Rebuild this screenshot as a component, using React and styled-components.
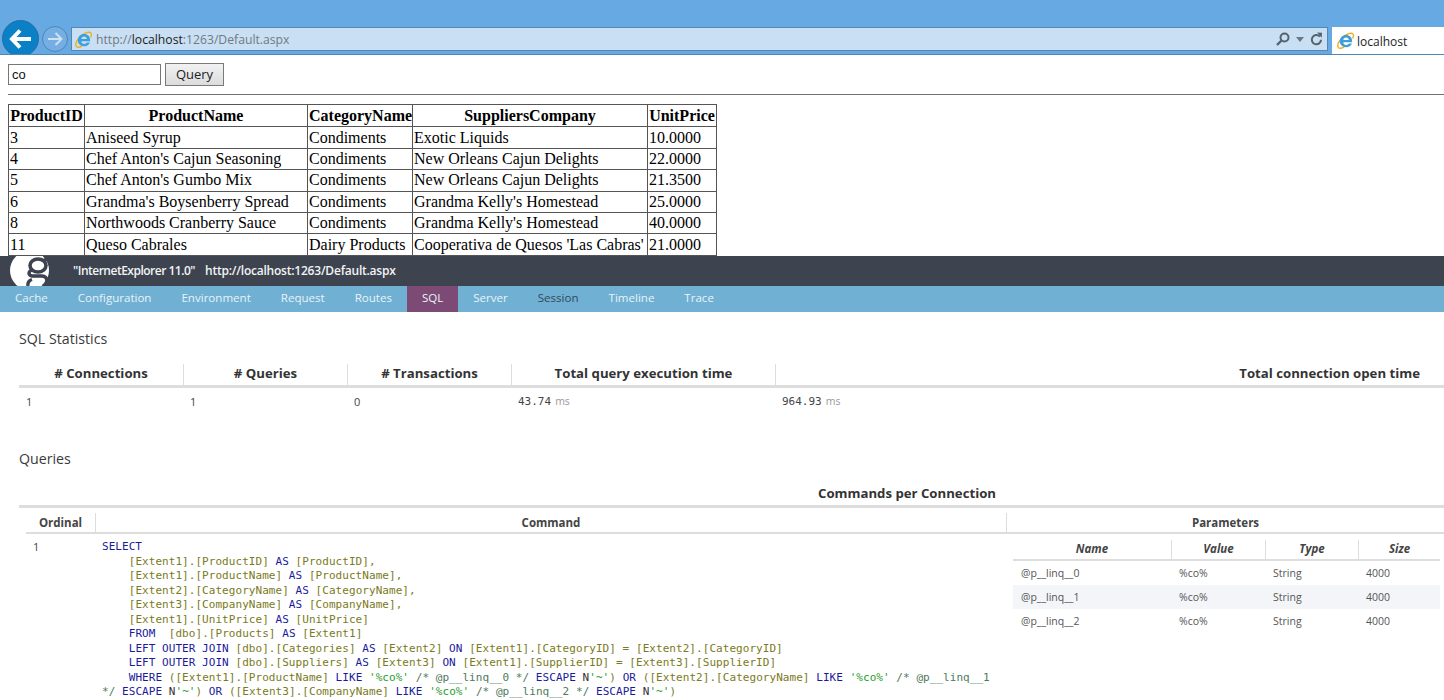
import React from "react";
import styled, { createGlobalStyle } from "styled-components";

const Global = createGlobalStyle`
  html, body { margin: 0; padding: 0; background: #fff; }
  * { box-sizing: border-box; }
`;

const Page = styled.div`
  width: 1444px;
  height: 700px;
  overflow: hidden;
  display: flex;
  flex-direction: column;
  font-family: "Liberation Serif", serif;
`;

/* browser chrome */
const Chrome = styled.header`
  height: 55px;
  flex: none;
  background: #67aae3;
  border-bottom: 1px solid #4d87b8;
  padding: 20px 0 0 2px;
  display: flex;
  overflow: hidden;
`;
const BackButton = styled.div`
  width: 37px;
  height: 37px;
  flex: none;
  border-radius: 50%;
  background: #0a80c6;
  border: 1px solid #2a6d9e;
  display: flex;
  align-items: center;
  justify-content: center;
`;
const ForwardButton = styled.div`
  width: 26px;
  height: 26px;
  flex: none;
  margin: 6px 0 0 3px;
  border-radius: 50%;
  background: #74aee2;
  border: 1px solid #4f86b4;
  display: flex;
  align-items: center;
  justify-content: center;
`;
const AddressBar = styled.div`
  width: 1257px;
  height: 24px;
  flex: none;
  margin: 7px 0 0 3px;
  background: #c9dff4;
  border: 1px solid #5488b4;
  display: flex;
  align-items: center;
  padding: 0 0 0 3px;
`;
const Url = styled.span`
  margin: 1px 0 0 4px;
  flex: 1;
  font: 12.2px "Open Sans", sans-serif;
  color: #6f7a85;
`;
const Host = styled.span`
  color: #1c1c1c;
`;
const BarTools = styled.div`
  display: flex;
  align-items: center;
  gap: 3px;
  padding-right: 4px;
`;
const ChromeTab = styled.div`
  margin: 7px 0 0 4px;
  flex: 1;
  height: 27px;
  background: #fff;
  display: flex;
  align-items: center;
  padding-left: 5px;
  gap: 3px;
  font: 12px "Open Sans", sans-serif;
  color: #1c1c1c;
`;
const TabTitle = styled.span`
  margin-top: 2px;
`;

/* page content */
const Content = styled.main`
  height: 201px;
  flex: none;
  overflow: hidden;
  padding: 8px 0 0 8px;
`;
const QueryForm = styled.form`
  display: flex;
  align-items: center;
  gap: 4px;
  height: 23px;
`;
const QueryInput = styled.input`
  width: 153px;
  height: 21px;
  border: 1px solid #767676;
  padding: 0 3px;
  font: 13px "Liberation Sans", sans-serif;
  color: #111;
  outline: none;
`;
const QueryButton = styled.button`
  width: 59px;
  height: 23px;
  border: 1px solid #7a7a7a;
  background: linear-gradient(#f2f2f2, #dcdcdc);
  padding: 0 0 2px;
  font: 13px "Open Sans", sans-serif;
  color: #222;
`;
const Rule = styled.hr`
  margin: 8px 0 9px;
  height: 1px;
  border: 0;
  background: #707070;
`;
const ProductTable = styled.table`
  border-collapse: collapse;
  table-layout: fixed;
  width: 708px;
  font-size: 16px;
  color: #000;
  th, td {
    border: 1px solid #555;
    padding: 0 1px;
    height: 21.4px;
    line-height: 18px;
    white-space: nowrap;
    overflow: hidden;
  }
  th { font-weight: 700; text-align: center; height: 22.4px; }
  td { text-align: left; }
`;

/* diagnostics panel */
const Panel = styled.section`
  flex: 1;
  min-height: 0;
  overflow: hidden;
  position: relative;
  font-family: "Open Sans", sans-serif;
  color: #333;
  background: #fff;
`;
const PanelHeader = styled.div`
  height: 30px;
  background: #3d4450;
  display: flex;
  align-items: center;
  overflow: hidden;
  padding-left: 10px;
  font-size: 12px;
  font-weight: 600;
  color: #f2f3f4;
`;
const LogoBox = styled.div`
  width: 39px;
  height: 30px;
  margin-right: 24px;
  flex: none;
`;
const BrowserName = styled.span`
  white-space: pre;
  margin-top: -2px;
  letter-spacing: -0.5px;
`;
const PageUrl = styled.span`
  white-space: pre;
  margin: -2px 0 0 10px;
  letter-spacing: -0.22px;
`;
const TabBar = styled.nav`
  height: 26px;
  background: #70b0d3;
  display: flex;
`;
const Tab = styled.div`
  height: 26px;
  padding: 0 15px 4px;
  display: flex;
  align-items: center;
  font-size: 11.55px;
  color: ${p => (p.$dark ? "#34495a" : "#e8f3f8")};
  background: ${p => (p.$active ? "#7d4a76" : "transparent")};
`;
const Body = styled.div`
  padding: 17px 0 0 19px;
`;
const SectionTitle = styled.h2`
  margin: 0;
  font-size: 14.2px;
  line-height: 20px;
  font-weight: 400;
  color: #3a3a3a;
`;
const StatsHead = styled.div`
  display: grid;
  grid-template-columns: 165px 164px 164px 264px 1fr;
  height: 24px;
  margin-top: 15px;
  border-bottom: 3px solid #ddd;
`;
const StatHeadCell = styled.div`
  height: 21px;
  padding: ${p => (p.$right ? "0 24px 0 0" : "0")};
  text-align: ${p => (p.$right ? "right" : "center")};
  line-height: 18px;
  font-size: 13.2px;
  font-weight: 700;
  color: #333;
  border-right: ${p => (p.$last ? "0" : "1px solid #ddd")};
`;
const StatsRow = styled.div`
  display: grid;
  grid-template-columns: 164px 164px 164px 264px 1fr;
  height: 26px;
  align-items: center;
`;
const StatCount = styled.div`
  padding-left: 7px;
  font: 11px "Open Sans", sans-serif;
  color: #444;
`;
const StatValue = styled.div`
  padding-left: 7px;
  font: 11px "DejaVu Sans Mono", monospace;
  color: #444;
`;
const Unit = styled.span`
  margin-left: 4px;
  color: #999;
  font: 10.5px "Open Sans", sans-serif;
`;
const QueriesTitle = styled(SectionTitle)`
  margin-top: 35px;
`;
const CommandsTitle = styled.div`
  margin-top: 14px;
  padding-left: 351px;
  height: 25px;
  text-align: center;
  font-size: 13.2px;
  font-weight: 700;
  line-height: 20px;
  color: #333;
  border-bottom: 3px solid #ddd;
`;
const CommandsHead = styled.div`
  display: grid;
  grid-template-columns: 70px 911px 1fr;
  margin-left: 7px;
  height: 26px;
  border-bottom: 2px solid #ddd;
`;
const CommandHeadCell = styled.div`
  height: 19px;
  margin-top: 5px;
  text-align: center;
  font-size: 11.5px;
  font-weight: 700;
  line-height: 19px;
  color: #444;
  border-right: ${p => (p.$last ? "0" : "1px solid #ddd")};
`;
const CommandRow = styled.div`
  display: grid;
  grid-template-columns: 76px 911px 1fr;
`;
const Ordinal = styled.div`
  padding: 5px 0 0 14px;
  font: 11px "Open Sans", sans-serif;
  color: #444;
`;
const Sql = styled.pre`
  margin: 0;
  padding: 6px 0 0 7px;
  font: 11px/14.5px "DejaVu Sans Mono", monospace;
  letter-spacing: 0.05px;
  color: #333;
  white-space: pre;
`;
const Kw = styled.span`color: #1a1a9c;`;
const Br = styled.span`color: #7a7a22;`;
const Str = styled.span`color: #1f9c2a;`;
const Cm = styled.span`color: #4d7a5c;`;
const ParamsWrap = styled.div`
  padding: 6px 4px 0 7px;
`;
const ParamsHead = styled.div`
  display: grid;
  grid-template-columns: 159px 94px 93px 1fr;
  height: 21px;
  border-bottom: 2px solid #ddd;
`;
const ParamHeadCell = styled.div`
  height: 19px;
  text-align: center;
  font-size: 11.5px;
  font-style: italic;
  font-weight: 700;
  line-height: 17px;
  color: #444;
  border-right: ${p => (p.$last ? "0" : "1px solid #ddd")};
`;
const ParamRow = styled.div`
  display: grid;
  grid-template-columns: 158px 94px 93px 1fr;
  height: 24px;
  padding-bottom: 1px;
  align-items: center;
  background: ${p => (p.$striped ? "#f3f5f9" : "transparent")};
`;
const ParamCell = styled.div`
  padding-left: 8px;
  font-size: 10.5px;
  color: #555;
`;

const IeIcon = () => (
  <svg width="17" height="17" viewBox="0 0 17 17" aria-hidden="true">
    <path d="M16 2.200C14.500.2 9.500 1.500 5.500 5.600 1.800 9.400.2 13.500 1.300 15.300c1 1.400 3.700.8 6-.5" fill="none" stroke="#eeb01c" strokeWidth="1.400" />
    <path d="M16 2.200c.7 1 .4 2.700-.4 4.300" fill="none" stroke="#eeb01c" strokeWidth="1.400" />
    <path d="M2.800 9.300C2.800 5.500 5.600 2.900 9.200 2.900c3.500 0 5.900 2.500 5.900 6v1.300H6.300c.1 1.700 1.300 2.700 3 2.700 1.200 0 2.100-.5 2.600-1.400h3c-.8 2.300-3 3.700-5.600 3.700-3.800 0-6.500-2.400-6.500-5.900zm3.500-1.200h5.500c-.1-1.500-1.100-2.600-2.700-2.600-1.500 0-2.600 1-2.800 2.600z" fill="#3d9fdd" />
  </svg>
);

const BackArrow = () => (
  <svg width="24" height="22" viewBox="0 0 24 22" aria-hidden="true">
    <path d="M11 2.500 3 11l8 8.500M3.500 11H22" fill="none" stroke="#fff" strokeWidth="4" />
  </svg>
);
const ForwardArrow = () => (
  <svg width="16" height="14" viewBox="0 0 16 14" aria-hidden="true">
    <path d="M8.500 1 14.500 7l-6 6M14 7H1" fill="none" stroke="#cfe0f0" strokeWidth="2" />
  </svg>
);
const SearchIcon = () => (
  <svg width="14" height="14" viewBox="0 0 14 14" aria-hidden="true">
    <circle cx="8.500" cy="5.500" r="4" fill="none" stroke="#55636f" strokeWidth="2" />
    <path d="M5.500 8.500 1 13" stroke="#55636f" strokeWidth="2.400" />
  </svg>
);
const CaretSvg = styled.svg`
  margin: 0 3px;
`;
const Caret = () => (
  <CaretSvg width="8" height="5" viewBox="0 0 8 5" aria-hidden="true">
    <path d="M0 0h8L4 5z" fill="#6b7882" />
  </CaretSvg>
);
const RefreshIcon = () => (
  <svg width="13" height="14" viewBox="0 0 13 14" aria-hidden="true">
    <path d="M9.800 4.600a4.600 4.600 0 1 0 1.200 3.100" fill="none" stroke="#55636f" strokeWidth="2" />
    <path d="M7 .5l5 .2-.3 5z" fill="#55636f" />
  </svg>
);
const Logo = () => (
  <svg width="39" height="30" viewBox="0 0 39 30" aria-hidden="true">
    <circle cx="19.500" cy="14.500" r="19.500" fill="#fff" />
    <ellipse cx="28" cy="9.500" rx="8" ry="6.500" fill="none" stroke="#3d4450" strokeWidth="3.600" />
    <path d="M33 4.500l6-2" fill="none" stroke="#3d4450" strokeWidth="3" />
    <path d="M22 14c-4 1.500-4 5 0 6h10c6 .5 6.500 7 1 10" fill="none" stroke="#3d4450" strokeWidth="3.400" />
    <path d="M18 30c-.5-3 1-5.500 4-6.500" fill="none" stroke="#3d4450" strokeWidth="3.400" />
  </svg>
);

const products = [
  ["3", "Aniseed Syrup", "Condiments", "Exotic Liquids", "10.0000"],
  ["4", "Chef Anton's Cajun Seasoning", "Condiments", "New Orleans Cajun Delights", "22.0000"],
  ["5", "Chef Anton's Gumbo Mix", "Condiments", "New Orleans Cajun Delights", "21.3500"],
  ["6", "Grandma's Boysenberry Spread", "Condiments", "Grandma Kelly's Homestead", "25.0000"],
  ["8", "Northwoods Cranberry Sauce", "Condiments", "Grandma Kelly's Homestead", "40.0000"],
  ["11", "Queso Cabrales", "Dairy Products", "Cooperativa de Quesos 'Las Cabras'", "21.0000"],
];
const tabs = ["Cache", "Configuration", "Environment", "Request", "Routes", "SQL", "Server", "Session", "Timeline", "Trace"];
const stats = ["# Connections", "# Queries", "# Transactions", "Total query execution time", "Total connection open time"];
const params = ["@p__linq__0", "@p__linq__1", "@p__linq__2"];

export default function App() {
  return (
    <Page>
      <Global />
      <Chrome>
        <BackButton><BackArrow /></BackButton>
        <ForwardButton><ForwardArrow /></ForwardButton>
        <AddressBar>
          <IeIcon />
          <Url>http://<Host>localhost</Host>:1263/Default.aspx</Url>
          <BarTools><SearchIcon /><Caret /><RefreshIcon /></BarTools>
        </AddressBar>
        <ChromeTab><IeIcon /><TabTitle>localhost</TabTitle></ChromeTab>
      </Chrome>
      <Content>
        <QueryForm>
          <QueryInput defaultValue="co" />
          <QueryButton type="button">Query</QueryButton>
        </QueryForm>
        <Rule />
        <ProductTable>
          <colgroup>
            <col width="76" /><col width="223" /><col width="105" /><col width="235" /><col width="69" />
          </colgroup>
          <thead>
            <tr><th>ProductID</th><th>ProductName</th><th>CategoryName</th><th>SuppliersCompany</th><th>UnitPrice</th></tr>
          </thead>
          <tbody>
            {products.map(r => (
              <tr key={r[0]}>{r.map((c, i) => <td key={i}>{c}</td>)}</tr>
            ))}
          </tbody>
        </ProductTable>
      </Content>
      <Panel>
        <PanelHeader>
          <LogoBox><Logo /></LogoBox>
          <BrowserName>"InternetExplorer 11.0"</BrowserName>
          <PageUrl>http://localhost:1263/Default.aspx</PageUrl>
        </PanelHeader>
        <TabBar>
          {tabs.map(t => <Tab key={t} $active={t === "SQL"} $dark={t === "Session"}>{t}</Tab>)}
        </TabBar>
        <Body>
          <SectionTitle>SQL Statistics</SectionTitle>
          <StatsHead>
            {stats.map((s, i) => <StatHeadCell key={s} $right={i === 4} $last={i === 4}>{s}</StatHeadCell>)}
          </StatsHead>
          <StatsRow>
            <StatCount>1</StatCount>
            <StatCount>1</StatCount>
            <StatCount>0</StatCount>
            <StatValue>43.74<Unit>ms</Unit></StatValue>
            <StatValue>964.93<Unit>ms</Unit></StatValue>
          </StatsRow>
          <QueriesTitle>Queries</QueriesTitle>
          <CommandsTitle>Commands per Connection</CommandsTitle>
          <CommandsHead>
            <CommandHeadCell>Ordinal</CommandHeadCell>
            <CommandHeadCell>Command</CommandHeadCell>
            <CommandHeadCell $last>Parameters</CommandHeadCell>
          </CommandsHead>
          <CommandRow>
            <Ordinal>1</Ordinal>
            <Sql>
              <Kw>SELECT</Kw>{"\n    "}
              <Br>[Extent1].[ProductID]</Br> <Kw>AS</Kw> <Br>[ProductID],</Br>{"\n    "}
              <Br>[Extent1].[ProductName]</Br> <Kw>AS</Kw> <Br>[ProductName],</Br>{"\n    "}
              <Br>[Extent2].[CategoryName]</Br> <Kw>AS</Kw> <Br>[CategoryName],</Br>{"\n    "}
              <Br>[Extent3].[CompanyName]</Br> <Kw>AS</Kw> <Br>[CompanyName],</Br>{"\n    "}
              <Br>[Extent1].[UnitPrice]</Br> <Kw>AS</Kw> <Br>[UnitPrice]</Br>{"\n    "}
              <Kw>FROM</Kw>{"  "}<Br>[dbo].[Products]</Br> <Kw>AS</Kw> <Br>[Extent1]</Br>{"\n    "}
              <Kw>LEFT OUTER JOIN</Kw> <Br>[dbo].[Categories]</Br> <Kw>AS</Kw> <Br>[Extent2]</Br> <Kw>ON</Kw> <Br>[Extent1].[CategoryID]</Br> <Br>=</Br> <Br>[Extent2].[CategoryID]</Br>{"\n    "}
              <Kw>LEFT OUTER JOIN</Kw> <Br>[dbo].[Suppliers]</Br> <Kw>AS</Kw> <Br>[Extent3]</Br> <Kw>ON</Kw> <Br>[Extent1].[SupplierID]</Br> <Br>=</Br> <Br>[Extent3].[SupplierID]</Br>{"\n    "}
              <Kw>WHERE</Kw> <Br>([Extent1].[ProductName]</Br> <Kw>LIKE</Kw> <Str>'%co%'</Str> <Cm>/* @p__linq__0 */</Cm> <Kw>ESCAPE</Kw> N<Str>'~'</Str><Br>)</Br> <Kw>OR</Kw> <Br>([Extent2].[CategoryName]</Br> <Kw>LIKE</Kw> <Str>'%co%'</Str> <Cm>/* @p__linq__1</Cm>{"\n"}
              <Cm>*/</Cm> <Kw>ESCAPE</Kw> N<Str>'~'</Str><Br>)</Br> <Kw>OR</Kw> <Br>([Extent3].[CompanyName]</Br> <Kw>LIKE</Kw> <Str>'%co%'</Str> <Cm>/* @p__linq__2 */</Cm> <Kw>ESCAPE</Kw> N<Str>'~'</Str><Br>)</Br>
            </Sql>
            <ParamsWrap>
              <ParamsHead>
                <ParamHeadCell>Name</ParamHeadCell>
                <ParamHeadCell>Value</ParamHeadCell>
                <ParamHeadCell>Type</ParamHeadCell>
                <ParamHeadCell $last>Size</ParamHeadCell>
              </ParamsHead>
              {params.map((p, i) => (
                <ParamRow key={p} $striped={i === 1}>
                  <ParamCell>{p}</ParamCell>
                  <ParamCell>%co%</ParamCell>
                  <ParamCell>String</ParamCell>
                  <ParamCell>4000</ParamCell>
                </ParamRow>
              ))}
            </ParamsWrap>
          </CommandRow>
        </Body>
      </Panel>
    </Page>
  );
}
